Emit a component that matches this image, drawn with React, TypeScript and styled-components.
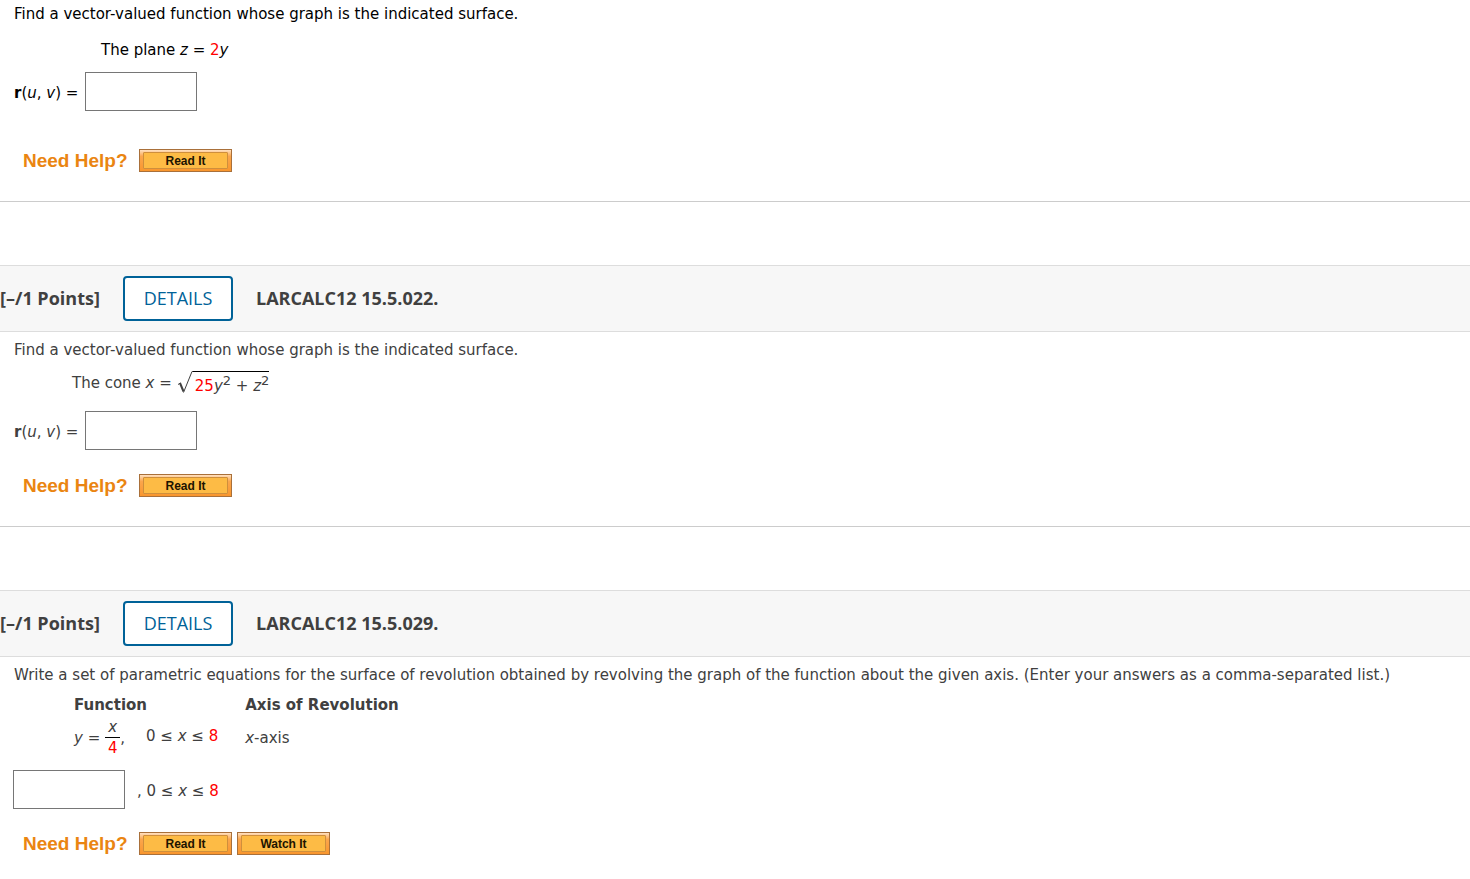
import React from "react";
import styled, { createGlobalStyle } from "styled-components";

const GlobalStyle = createGlobalStyle`
  * { box-sizing: border-box; }
  body {
    margin: 0;
    background: #fff;
    color: #404040;
    font-family: Verdana, "DejaVu Sans", sans-serif;
    font-size: 15px;
    line-height: 24px;
  }
`;

const Question = styled.section<{ $first?: boolean }>`
  color: ${(p) => (p.$first ? "#000" : "#404040")};
`;

const Header = styled.header`
  display: flex;
  align-items: center;
  height: 67px;
  margin-top: 63px;
  border-top: 1px solid #ddd;
  border-bottom: 1px solid #ddd;
  background: #f7f7f7;
  font-family: "Open Sans", sans-serif;
  font-size: 18px;
`;

const Points = styled.span`
  width: 123px;
  padding-bottom: 2px;
  font-weight: 700;
`;

const DetailsButton = styled.button`
  width: 110px;
  height: 45px;
  margin-right: 23px;
  padding: 0 0 1px;
  border: 2px solid #006298;
  border-radius: 4px;
  background: #fff;
  color: #006298;
  font: 500 18px "Open Sans", sans-serif;
`;

const Code = styled.h2`
  margin: 0;
  padding-bottom: 2px;
  font-size: 18px;
  font-weight: 700;
`;

const Content = styled.div<{ $top?: number }>`
  padding: ${(p) => p.$top ?? 6}px 13px 0;
`;

const Prompt = styled.p`
  margin: 0;
  padding-left: 1px;
`;

const Statement = styled.p<{ $indent: number; $top: number; $bottom: number }>`
  display: flex;
  align-items: center;
  margin: ${(p) => `${p.$top}px 0 ${p.$bottom}px ${p.$indent}px`};
  white-space: pre;
`;

const Red = styled.span`
  color: #f00;
`;

const Root = styled.span`
  display: flex;
  margin-left: 5px;
`;

const RootSign = styled.svg`
  width: 16px;
  height: 24px;
`;

const Radicand = styled.span`
  height: 24px;
  padding: 2px 0 0 2px;
  border-top: 1px solid #000;
`;

const Sup = styled.sup`
  font-size: 13px;
  line-height: 0;
  vertical-align: 6px;
`;

const AnswerRow = styled.div`
  display: flex;
  align-items: center;
`;

const AnswerLabel = styled.label`
  width: 72px;
  padding: 3px 0 0 1px;
  white-space: nowrap;
`;

const Answer = styled.input`
  width: 112px;
  height: 39px;
  padding: 4px;
  border: 1px solid #767676;
  background: #fff;
  font: inherit;
`;

const AnswerNote = styled.span`
  padding: 2px 0 0 12px;
`;

const Help = styled.div<{ $top: number }>`
  display: flex;
  align-items: center;
  gap: 5px;
  margin-top: ${(p) => p.$top}px;
  padding-left: 10px;
  font-family: "Liberation Sans", Arial, sans-serif;
`;

const HelpTitle = styled.span`
  width: 111px;
  color: #ea8511;
  font-size: 19px;
  font-weight: 700;
  line-height: 22px;
`;

const HelpButton = styled.button`
  display: flex;
  width: 93px;
  height: 23px;
  padding: 2px 3px;
  border: 1px solid #a9703a;
  background: linear-gradient(#ffe0c0, #fba64d 30%, #f9962d);
  color: #1c1400;
`;

const HelpFace = styled.span`
  flex: 1;
  border: 1px solid #cf8f3c;
  border-radius: 1px;
  background: #fdbb45;
  font: 700 12px/17px "Liberation Sans", Arial, sans-serif;
  text-align: center;
`;

const Divider = styled.hr<{ $top: number }>`
  margin: ${(p) => p.$top}px 0 0;
  border: 0;
  border-top: 1px solid #ccc;
`;

const Functions = styled.table`
  margin: 6px 0 12px 61px;
  border-collapse: collapse;

  th, td {
    padding: 0 27px 0 0;
    text-align: left;
    white-space: nowrap;
  }
  td { height: 40px; }
`;

const Formula = styled.div`
  display: flex;
  align-items: center;
`;

const Fraction = styled.span`
  display: inline-flex;
  flex-direction: column;
  width: 15px;
  margin-left: 5px;
  text-align: center;
  line-height: 20px;
`;

const Denominator = styled(Red)`
  border-top: 1px solid #000;
`;

const Domain = styled.span`
  margin-left: 21px;
  padding-bottom: 4px;
`;

function QuestionHeader({ code }: { code: string }) {
  return (
    <Header>
      <Points>[–/1 Points]</Points>
      <DetailsButton type="button">DETAILS</DetailsButton>
      <Code>{code}</Code>
    </Header>
  );
}

function VectorAnswer({ id }: { id: string }) {
  return (
    <AnswerRow>
      <AnswerLabel htmlFor={id}>
        <b>r</b>(<i>u</i>, <i>v</i>) =
      </AnswerLabel>
      <Answer id={id} type="text" />
    </AnswerRow>
  );
}

function NeedHelp({ actions, top }: { actions: string[]; top: number }) {
  return (
    <Help $top={top}>
      <HelpTitle>Need Help?</HelpTitle>
      {actions.map((action) => (
        <HelpButton key={action} type="button">
          <HelpFace>{action}</HelpFace>
        </HelpButton>
      ))}
    </Help>
  );
}

export default function App() {
  return (
    <main>
      <GlobalStyle />
      <Question $first>
        <Content $top={2}>
          <Prompt>Find a vector-valued function whose graph is the indicated surface.</Prompt>
          <Statement $indent={88} $top={12} $bottom={10}>
            <span>
              The plane <i>z</i> = <Red>2</Red>
              <i>y</i>
            </span>
          </Statement>
          <VectorAnswer id="plane-answer" />
          <NeedHelp actions={["Read It"]} top={38} />
        </Content>
        <Divider $top={29} />
      </Question>

      <Question>
        <QuestionHeader code="LARCALC12 15.5.022." />
        <Content>
          <Prompt>Find a vector-valued function whose graph is the indicated surface.</Prompt>
          <Statement $indent={59} $top={9} $bottom={16}>
            <span>
              The cone <i>x</i> =
            </span>
            <Root>
              <RootSign viewBox="0 0 16 24" fill="none" stroke="#404040" aria-hidden="true">
                <path d="M1 13.5 L3.5 12" strokeWidth="1" />
                <path d="M3 12 L6.5 20.5" strokeWidth="2" />
                <path d="M6.5 21.5 L15 0.5 H16" strokeWidth="1" />
              </RootSign>
              <Radicand>
                <Red>25</Red>
                <i>y</i>
                <Sup>2</Sup> + <i>z</i>
                <Sup>2</Sup>
              </Radicand>
            </Root>
          </Statement>
          <VectorAnswer id="cone-answer" />
          <NeedHelp actions={["Read It"]} top={24} />
        </Content>
        <Divider $top={29} />
      </Question>

      <Question>
        <QuestionHeader code="LARCALC12 15.5.029." />
        <Content>
          <Prompt>
            Write a set of parametric equations for the surface of revolution obtained by revolving the graph of the
            function about the given axis. (Enter your answers as a comma-separated list.)
          </Prompt>
          <Functions>
            <thead>
              <tr>
                <th scope="col">Function</th>
                <th scope="col">Axis of Revolution</th>
              </tr>
            </thead>
            <tbody>
              <tr>
                <td>
                  <Formula>
                    <span>
                      <i>y</i> =
                    </span>
                    <Fraction>
                      <i>x</i>
                      <Denominator>4</Denominator>
                    </Fraction>
                    <span>,</span>
                    <Domain>
                      0 ≤ <i>x</i> ≤ <Red>8</Red>
                    </Domain>
                  </Formula>
                </td>
                <td>
                  <i>x</i>-axis
                </td>
              </tr>
            </tbody>
          </Functions>
          <AnswerRow>
            <Answer type="text" aria-label="Parametric equations" />
            <AnswerNote>
              , 0 ≤ <i>x</i> ≤ <Red>8</Red>
            </AnswerNote>
          </AnswerRow>
          <NeedHelp actions={["Read It", "Watch It"]} top={23} />
        </Content>
      </Question>
    </main>
  );
}
